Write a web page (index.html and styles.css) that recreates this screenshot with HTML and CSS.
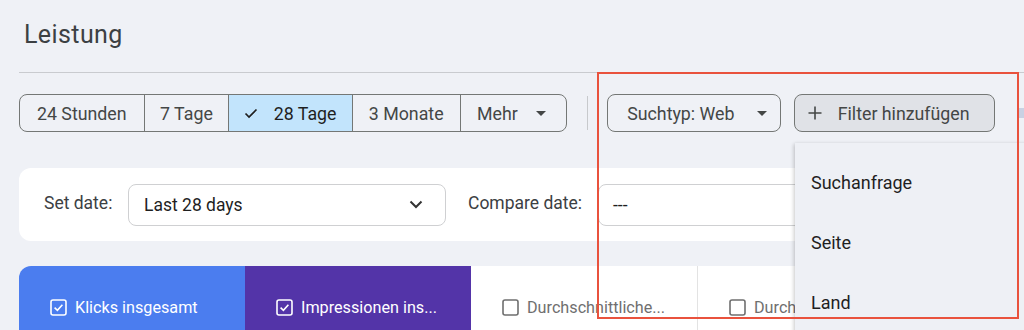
FILE: index.html
```html
<!DOCTYPE html>
<html lang="de">
<head>
<meta charset="utf-8">
<title>Leistung</title>
<link rel="stylesheet" href="styles.css">
</head>
<body>
<div class="page">
  <h1 class="title">Leistung</h1>
  <div class="rule"></div>

  <div class="toolbar">
    <div class="segmented">
      <button class="seg seg-24">24 Stunden</button>
      <button class="seg seg-7">7 Tage</button>
      <button class="seg seg-28 is-selected">
        <svg class="check" viewBox="0 0 16 16" width="16" height="16"><path d="M2.5 8.5 L6 12 L13.5 4.5" fill="none" stroke="#1f1f1f" stroke-width="1.7"/></svg>
        28 Tage
      </button>
      <button class="seg seg-3m">3 Monate</button>
      <button class="seg seg-more">Mehr
        <svg class="caret" viewBox="0 0 10 5" width="10" height="5"><path d="M0 0 L10 0 L5 5 Z" fill="#444746"/></svg>
      </button>
    </div>
    <div class="vdivider"></div>
    <button class="chip chip-type">Suchtyp: Web
      <svg class="caret" viewBox="0 0 10 5" width="10" height="5"><path d="M0 0 L10 0 L5 5 Z" fill="#444746"/></svg>
    </button>
    <button class="chip chip-filter">
      <svg class="plus" viewBox="0 0 16 16" width="16" height="16"><path d="M8 1.5 V14.5 M1.5 8 H14.5" stroke="#444746" stroke-width="1.6" fill="none"/></svg>
      Filter hinzufügen
    </button>
    <span class="peek"></span>
  </div>

  <div class="datecard">
    <span class="label label-set">Set date:</span>
    <div class="select select-date">
      <span>Last 28 days</span>
      <svg class="chev" viewBox="0 0 14 9" width="14" height="9"><path d="M1.5 1.5 L7 7 L12.5 1.5" fill="none" stroke="#333" stroke-width="2"/></svg>
    </div>
    <span class="label label-compare">Compare date:</span>
    <div class="select select-compare"><span>---</span></div>
  </div>

  <div class="metrics">
    <div class="metric metric-clicks">
      <svg class="box" viewBox="0 0 17 17" width="17" height="17"><rect x="1" y="1" width="15" height="15" rx="2" fill="none" stroke="#fff" stroke-width="1.6"/><path d="M4.6 8.7 L7.4 11.4 L12.4 5.8" fill="none" stroke="#fff" stroke-width="1.6"/></svg>
      <span>Klicks insgesamt</span>
    </div>
    <div class="metric metric-impr">
      <svg class="box" viewBox="0 0 17 17" width="17" height="17"><rect x="1" y="1" width="15" height="15" rx="2" fill="none" stroke="#fff" stroke-width="1.6"/><path d="M4.6 8.7 L7.4 11.4 L12.4 5.8" fill="none" stroke="#fff" stroke-width="1.6"/></svg>
      <span>Impressionen ins...</span>
    </div>
    <div class="metric metric-plain">
      <svg class="box" viewBox="0 0 17 17" width="17" height="17"><rect x="1" y="1" width="15" height="15" rx="2" fill="none" stroke="#6f6f6f" stroke-width="1.6"/></svg>
      <span>Durchschnittliche...</span>
    </div>
    <div class="metric metric-plain metric-last">
      <svg class="box" viewBox="0 0 17 17" width="17" height="17"><rect x="1" y="1" width="15" height="15" rx="2" fill="none" stroke="#6f6f6f" stroke-width="1.6"/></svg>
      <span class="clip">Durchschnittliche Position</span>
    </div>
  </div>

  <div class="menu">
    <div class="menu-item">Suchanfrage</div>
    <div class="menu-item">Seite</div>
    <div class="menu-item">Land</div>
  </div>

  <div class="highlight"></div>
</div>
</body>
</html>
```

FILE: styles.css
```css
* { box-sizing: border-box; }
html, body { margin: 0; padding: 0; }
body {
  background: #eff1f6;
  font-family: Roboto, "Liberation Sans", sans-serif;
  color: #444746;
}
.page {
  position: relative;
  width: 1024px;
  height: 330px;
  overflow: hidden;
  padding-left: 19px;
}
.title {
  margin: 0;
  padding: 20px 0 0 5px;
  height: 72px;
  font-size: 25px;
  letter-spacing: 0.4px;
  line-height: 30px;
  font-weight: 400;
  color: #3c4043;
}
.rule {
  height: 1px;
  background: #c9cbcf;
  margin-right: -19px;
}
.toolbar {
  display: flex;
  align-items: center;
  margin-top: 21px;
  height: 38px;
  white-space: nowrap;
}
.segmented {
  display: flex;
  height: 38px;
  border: 1px solid #747775;
  border-radius: 8px;
  overflow: hidden;
}
.seg {
  display: flex;
  align-items: center;
  justify-content: center;
  gap: 6px;
  height: 100%;
  margin: 0;
  padding: 0;
  border: 0;
  border-left: 1px solid #747775;
  background: transparent;
  font-family: Roboto, "Liberation Sans", sans-serif;
  font-size: 17.8px;
  color: #444746;
}
.seg-24 { width: 124px; border-left: 0; }
.seg-7 { width: 85px; }
.seg-28 { width: 124px; gap: 15px; }
.seg-3m { width: 108px; }
.seg-more { width: 107px; gap: 18px; padding-right: 4px; }
.is-selected { background: #c2e4fc; color: #1f1f1f; }
.check { margin-left: -2px; }
.vdivider {
  width: 1px;
  height: 34px;
  background: #c7c9cc;
  margin: 0 19px 0 20px;
}
.chip {
  display: flex;
  align-items: center;
  height: 38px;
  margin: 0;
  border: 1px solid #747775;
  border-radius: 8px;
  background: transparent;
  font-family: Roboto, "Liberation Sans", sans-serif;
  font-size: 17.8px;
  color: #444746;
}
.chip-type { width: 174px; padding: 0 0 0 19px; gap: 23px; }
.chip-filter {
  width: 202px;
  margin-left: 13px;
  padding: 0 0 0 12px;
  gap: 15px;
  background: #e0e2e7;
}
.peek {
  width: 6px;
  height: 10px;
  margin-left: 23px;
  background: #c9d1e3;
}
.datecard {
  display: flex;
  align-items: center;
  margin-top: 36px;
  width: 1100px;
  height: 73px;
  padding-left: 25px;
  background: #fff;
  border-radius: 12px;
}
.label {
  font-size: 17.5px;
  color: #3c4043;
  margin-top: -4px;
}
.label-set { width: 84px; }
.select {
  display: flex;
  align-items: center;
  justify-content: space-between;
  height: 42px;
  width: 318px;
  border: 1px solid #cfd0d2;
  border-radius: 8px;
  padding: 0 22px 0 15px;
  font-size: 17.5px;
  color: #1f1f1f;
}
.label-compare { margin-left: 22px; width: 130px; }
.select-compare { padding-left: 14px; }
.metrics {
  display: flex;
  margin-top: 25px;
  height: 82px;
}
.metric {
  display: flex;
  align-items: center;
  gap: 8px;
  width: 226px;
  padding: 0 0 0 31px;
  font-size: 16.2px;
  white-space: nowrap;
  overflow: hidden;
}
.metric-clicks { background: #4b7def; color: #fff; border-top-left-radius: 12px; }
.metric-impr { background: #5334a8; color: #fff; }
.metric-plain { background: #fff; color: #6f6f6f; }
.metric-last { border-left: 1px solid #e3e3e3; width: 240px; }
.clip { width: 43px; overflow: hidden; flex: none; }
.menu {
  position: absolute;
  left: 795px;
  top: 143px;
  width: 240px;
  height: 200px;
  padding-top: 10px;
  background: #eef0f5;
  box-shadow: -1px 1px 4px rgba(0, 0, 0, 0.22);
}
.menu-item {
  height: 60px;
  line-height: 60px;
  padding-left: 16px;
  font-size: 18px;
  color: #1f1f1f;
}
.highlight {
  position: absolute;
  left: 597px;
  top: 72px;
  width: 422px;
  height: 247px;
  border: 2px solid #e9523d;
  pointer-events: none;
}
```
